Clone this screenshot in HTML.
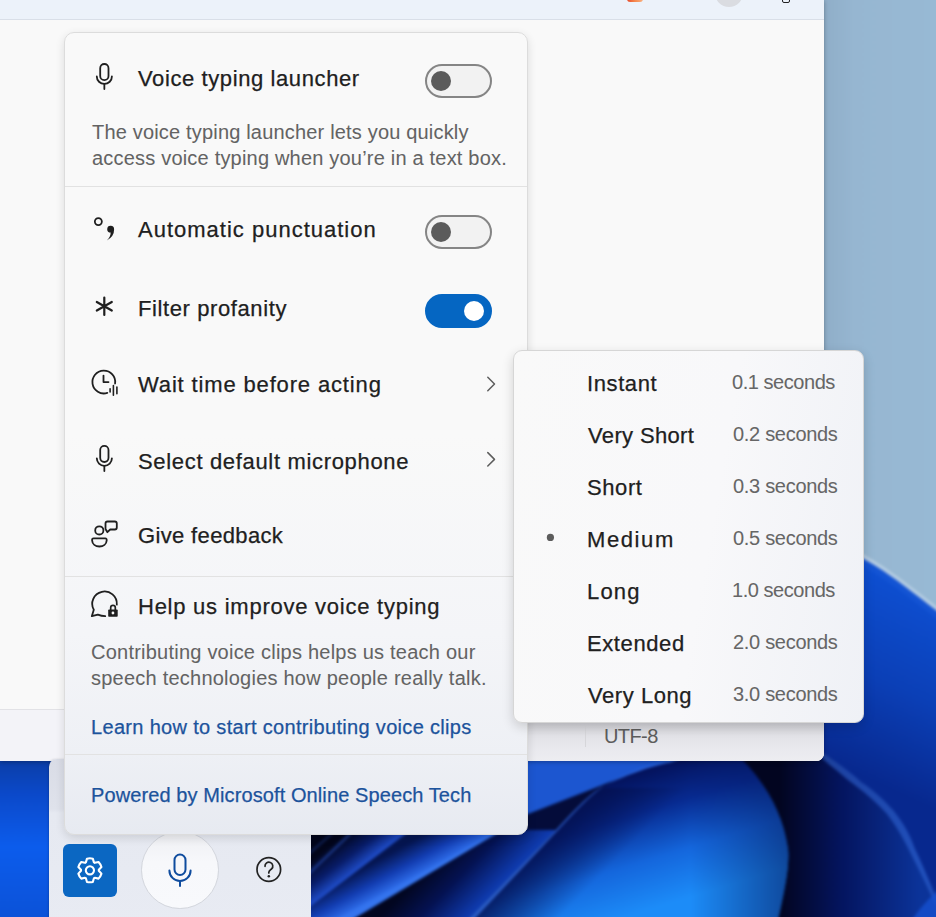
<!DOCTYPE html>
<html><head><meta charset="utf-8">
<style>
*{box-sizing:border-box;margin:0;padding:0}
html,body{width:936px;height:917px;overflow:hidden;background:#0b2a7a;font-family:"Liberation Sans",sans-serif}
.t{position:absolute;white-space:nowrap;line-height:1;-webkit-text-stroke:0.25px currentColor}
.main{font-size:22px;color:#202020;letter-spacing:0.6px}
.desc{font-size:20px;color:#636363;letter-spacing:0.18px;-webkit-text-stroke:0.05px currentColor}
.link{font-size:20px;color:#1c539c;letter-spacing:0.2px}
.secs{font-size:20px;color:#666666;letter-spacing:-0.3px;-webkit-text-stroke:0.05px currentColor}
#wall{position:absolute;left:0;top:0;width:936px;height:917px}
#np{position:absolute;left:0;top:0;width:824px;height:761px;background:#f9f9f9;border-bottom-right-radius:8px;overflow:hidden;box-shadow:0 1px 4px rgba(0,0,0,.3)}
#npTop{position:absolute;left:0;top:0;width:824px;height:20px;background:#ecf2fa;border-bottom:1.5px solid #d9dfe8}
#npStatus{position:absolute;left:0;top:709px;width:824px;height:52px;background:linear-gradient(90deg,#f3f3f8 0%,#f3f3f8 60%,#ececf0 62%,#ebebef 100%);border-top:1px solid #e2e2e6}
#npShade{position:absolute;left:500px;top:722px;width:324px;height:39px;background:linear-gradient(#d2d2d7,#e2e2e7 35%,#e9e9ee 70%,#ededf1)}
#bar{position:absolute;left:49px;top:759px;width:262px;height:170px;background:linear-gradient(#d9dce6 0,#dfe2eb 50px,#e6e9f1 54px,#e8ebf3 100%);border-top-left-radius:8px;box-shadow:-1px 0 2px rgba(0,0,0,.15)}
#gear{position:absolute;left:63px;top:844px;width:54px;height:53px;background:#0b67c2;border-radius:6px}
#micc{position:absolute;left:141px;top:831px;width:77.5px;height:77.5px;border-radius:50%;background:linear-gradient(#eeeff3,#f7f8fb 40%,#f8f9fc);border:1px solid #d3d6dd}
#panel{position:absolute;left:64px;top:32px;width:464px;height:803px;border-radius:10px;background:linear-gradient(#f9f9f9 0%,#f9f9f9 50%,#f4f5f8 75%,#eef0f5 90%,#e7eaf1 100%);border:1px solid #dcdcdc;box-shadow:0 3px 10px rgba(0,0,0,.12)}
.div{position:absolute;left:0;width:462px;height:1px;background:#e2e2e2}
#sub{position:absolute;left:513px;top:350px;width:351px;height:373px;border-radius:9px;background:linear-gradient(100deg,#f9f9f9 0%,#f8f8fa 55%,#eff1f6 100%);border:1px solid #d6d6d6;box-shadow:0 4px 12px rgba(0,0,0,.16)}
.tog{position:absolute;width:67px;height:34px;border-radius:17px;border:2px solid #858585;background:#f2f2f2}
.tog i{position:absolute;left:4px;top:5px;width:20px;height:20px;border-radius:50%;background:#5b5b5b}
.tog.on{background:#0566c2;border-color:#0566c2}
.tog.on i{left:37px;top:5px;background:#fff}
#icons{position:absolute;left:0;top:0;width:936px;height:917px}
</style></head><body>

<svg id="wall" width="936" height="917" viewBox="0 0 936 917">
  <defs>
    <linearGradient id="sky" x1="0" y1="0" x2="1" y2="0">
      <stop offset="0" stop-color="#7d98b2"/><stop offset="0.1" stop-color="#89a6bf"/><stop offset="0.45" stop-color="#96b6d1"/><stop offset="1" stop-color="#97b9d4"/>
    </linearGradient>
    <linearGradient id="rblue" x1="930" y1="600" x2="850" y2="770" gradientUnits="userSpaceOnUse">
      <stop offset="0" stop-color="#0d4ed0"/><stop offset="0.5" stop-color="#0b3fb6"/><stop offset="1" stop-color="#07288e"/>
    </linearGradient>
    <linearGradient id="petal" x1="560" y1="795" x2="600" y2="925" gradientUnits="userSpaceOnUse">
      <stop offset="0" stop-color="#03115a"/><stop offset="0.3" stop-color="#072a90"/><stop offset="0.65" stop-color="#1466dc"/><stop offset="1" stop-color="#1c8cf8"/>
    </linearGradient>
    <linearGradient id="cres" x1="780" y1="0" x2="920" y2="0" gradientUnits="userSpaceOnUse">
      <stop offset="0" stop-color="#020520"/><stop offset="0.45" stop-color="#041560"/><stop offset="1" stop-color="#0b3399"/>
    </linearGradient>
    <linearGradient id="lcol" x1="0" y1="761" x2="0" y2="917" gradientUnits="userSpaceOnUse">
      <stop offset="0" stop-color="#0b3ea8"/><stop offset="0.2" stop-color="#0b48c8"/><stop offset="0.55" stop-color="#0c5cec"/><stop offset="1" stop-color="#0b52d8"/>
    </linearGradient>
    <linearGradient id="folds" x1="519.2" y1="712.8" x2="601.8" y2="826.2" gradientUnits="userSpaceOnUse">
      <stop offset="0" stop-color="#02051a"/>
      <stop offset="0.12" stop-color="#040a30"/>
      <stop offset="0.264" stop-color="#2456d6"/>
      <stop offset="0.272" stop-color="#081650"/>
      <stop offset="0.40" stop-color="#0c2a8c"/>
      <stop offset="0.50" stop-color="#2f76ee"/>
      <stop offset="0.508" stop-color="#040b3a"/>
      <stop offset="0.62" stop-color="#061550"/>
      <stop offset="0.85" stop-color="#1448c4"/>
      <stop offset="1" stop-color="#1a55d0"/>
    </linearGradient>
    <linearGradient id="fold0" x1="330" y1="845" x2="352.6" y2="874.8" gradientUnits="userSpaceOnUse">
      <stop offset="0" stop-color="#02051a"/><stop offset="0.55" stop-color="#081c68"/><stop offset="1" stop-color="#2050d0"/>
    </linearGradient>
    <linearGradient id="fold1" x1="359" y1="870" x2="375" y2="899.4" gradientUnits="userSpaceOnUse">
      <stop offset="0" stop-color="#051550"/><stop offset="0.55" stop-color="#123cb0"/><stop offset="0.93" stop-color="#2a66e2"/><stop offset="1" stop-color="#3474ee"/>
    </linearGradient>
    <linearGradient id="fold2" x1="420" y1="875" x2="467" y2="920.9" gradientUnits="userSpaceOnUse">
      <stop offset="0" stop-color="#020620"/><stop offset="0.45" stop-color="#041252"/><stop offset="1" stop-color="#0f3db4"/>
    </linearGradient>
    <linearGradient id="pdark" x1="515" y1="873" x2="560" y2="917" gradientUnits="userSpaceOnUse">
      <stop offset="0" stop-color="#03104f" stop-opacity="0.85"/><stop offset="1" stop-color="#03104f" stop-opacity="0"/>
    </linearGradient>
    <linearGradient id="pright" x1="690" y1="0" x2="790" y2="0" gradientUnits="userSpaceOnUse">
      <stop offset="0" stop-color="#03104f" stop-opacity="0"/><stop offset="1" stop-color="#03104f" stop-opacity="0.55"/>
    </linearGradient>
    <filter id="blur" x="-10%" y="-10%" width="120%" height="120%" color-interpolation-filters="sRGB"><feGaussianBlur stdDeviation="1.5"/></filter>
  </defs>
  <rect x="0" y="0" width="936" height="917" fill="#081a66"/>
  <g filter="url(#blur)">
  <rect x="-10" y="740" width="70" height="190" fill="url(#lcol)"/>
  <path d="M780 -10 H946 V618 C910 590 885 570 862 558 C840 548 815 540 780 540 Z" fill="url(#sky)"/>
  <path d="M780 540 C815 540 840 548 862 558 C885 570 910 590 946 618 V930 H780 Z" fill="url(#rblue)"/>
  <path d="M780 540 C815 540 840 548 862 558 C885 570 910 590 946 618 V626 C910 598 885 578 862 566 C840 556 815 548 780 548Z" fill="#1a5ad8" opacity="0.5"/>
  <path d="M780 536 C815 536 840 544 862 554 C885 566 910 586 946 614 V618 C910 590 885 570 862 558 C840 548 815 540 780 540Z" fill="#c4d8ea" opacity="0.8"/>
  <!-- folds bottom-left -->
  <rect x="300" y="740" width="480" height="190" fill="#040c3a"/>
  <path d="M300 830 H411 L300 914.6Z" fill="url(#fold0)"/>
  <path d="M300 914.6 L411 830 H503 L335 930 H300Z" fill="url(#fold1)"/>
  <path d="M335 930 L503 830 H556 L458 930Z" fill="url(#fold2)"/>
  <path d="M300 880 L348 834 L352 834 L300 884Z" fill="#2a55c8" opacity="0.5"/>
  <path d="M300 860 L330 834 L333 834 L300 863Z" fill="#2a55c8" opacity="0.35"/>
  <!-- upper band -->
  <path d="M500 750 H700 L671 763 C650 770 620 777 600 786 L500 825Z" fill="#1c56d0"/>
  <!-- crescent -->
  <path d="M735 752 L822 752 C840 765 861 782 861 782 C880 795 893 810 893 810 C905 825 915 849 915 849 C925 870 932 888 940 900 V930 H776 C782 900 790 870 788 849 C782 810 765 782 735 752Z" fill="url(#cres)"/>
  <path d="M822 752 C840 765 850 772 861 782 C880 795 885 802 893 810 C905 825 910 835 915 849 C925 870 928 878 936 898 L936 906 C926 884 920 872 910 852 C902 836 896 826 887 814 C878 804 868 795 856 786 C845 778 832 766 816 754Z" fill="#2f62d0" opacity="0.6"/>
  <!-- bright petal -->
  <path d="M458 930 L556 830 C570 815 585 798 600 788 C625 775 650 766 671 762 C695 755 715 752 735 752 C765 782 782 810 788 849 C790 870 782 900 776 930Z" fill="url(#petal)"/>
  <path d="M458 930 L556 830 C570 815 585 798 600 788 L700 788 L700 930Z" fill="url(#pdark)"/>
  <path d="M690 752 L735 752 C765 782 782 810 788 849 C790 870 782 900 776 930 L690 930Z" fill="url(#pright)"/>
  <path d="M458 930 L556 830 C570 815 585 798 600 788 C625 775 650 766 671 762 L675 760 C652 764 628 772 604 786 C589 796 574 813 560 828 L464 930Z" fill="#3a78f0" opacity="0.7"/>
  <!-- bottom-right swirl -->
  <path d="M905 930 C918 910 930 895 946 885 V930Z" fill="#1550d0" opacity="0.8"/>
  </g>
</svg>

<div id="np">
  <div id="npTop"></div>
  <div style="position:absolute;left:627px;top:-4px;width:16px;height:6px;border-radius:3px;background:linear-gradient(90deg,#e84a2a,#f5894e 50%,#f9b080)"></div>
  <div style="position:absolute;left:715px;top:-21px;width:28px;height:28px;border-radius:50%;background:#dadce1"></div>
  <div style="position:absolute;left:782px;top:-6px;width:8px;height:9px;border-radius:2px;border:1.6px solid #222"></div>
  <div id="npStatus"></div>
  <div id="npShade"></div>
  <div style="position:absolute;left:585px;top:726px;width:1px;height:21px;background:#d6d6da"></div>
  <div class="t secs" style="left:604px;top:726px;color:#5c5c5c;letter-spacing:-0.6px">UTF-8</div>
</div>

<div id="bar"></div>
<div id="gear"></div>
<div id="micc"></div>

<div id="panel">
  <div class="div" style="top:153px"></div>
  <div class="div" style="top:543px"></div>
  <div class="div" style="top:721px"></div>
</div>

<div class="tog" style="left:425px;top:64px"><i></i></div>
<div class="tog" style="left:425px;top:215px"><i></i></div>
<div class="tog on" style="left:425px;top:294px"><i></i></div>

<div class="t main" style="left:138px;top:68px">Voice typing launcher</div>
<div class="t desc" style="left:92px;top:122px">The voice typing launcher lets you quickly</div>
<div class="t desc" style="left:92px;top:148px;letter-spacing:0.2px">access voice typing when you’re in a text box.</div>
<div class="t main" style="left:138px;top:219px;letter-spacing:1.0px">Automatic punctuation</div>
<div class="t main" style="left:138px;top:298px">Filter profanity</div>
<div class="t main" style="left:138px;top:374px;letter-spacing:0.85px">Wait time before acting</div>
<div class="t main" style="left:138px;top:451px;letter-spacing:0.67px">Select default microphone</div>
<div class="t main" style="left:138px;top:525px;letter-spacing:0.35px">Give feedback</div>
<div class="t main" style="left:138px;top:596px;letter-spacing:0.75px">Help us improve voice typing</div>
<div class="t desc" style="left:91px;top:642px;letter-spacing:0.23px">Contributing voice clips helps us teach our</div>
<div class="t desc" style="left:91px;top:668px;letter-spacing:0.23px">speech technologies how people really talk.</div>
<div class="t link" style="left:91px;top:717px;letter-spacing:0.32px">Learn how to start contributing voice clips</div>
<div class="t link" style="left:91px;top:785px;letter-spacing:0.1px">Powered by Microsoft Online Speech Tech</div>

<div id="sub"></div>
<div class="t main" style="left:587px;top:373px;letter-spacing:0.6px">Instant</div>
<div class="t main" style="left:588px;top:425px;letter-spacing:0.35px">Very Short</div>
<div class="t main" style="left:587px;top:477px;letter-spacing:0.6px">Short</div>
<div class="t main" style="left:587px;top:529px;letter-spacing:1.6px">Medium</div>
<div class="t main" style="left:587px;top:581px;letter-spacing:1.2px">Long</div>
<div class="t main" style="left:587px;top:633px;letter-spacing:0.6px">Extended</div>
<div class="t main" style="left:588px;top:685px;letter-spacing:0.55px">Very Long</div>
<div class="t secs" style="left:732px;top:372px;letter-spacing:-0.45px">0.1 seconds</div>
<div class="t secs" style="left:733px;top:424px">0.2 seconds</div>
<div class="t secs" style="left:733px;top:476px">0.3 seconds</div>
<div class="t secs" style="left:733px;top:528px">0.5 seconds</div>
<div class="t secs" style="left:732px;top:580px;letter-spacing:-0.45px">1.0 seconds</div>
<div class="t secs" style="left:733px;top:632px">2.0 seconds</div>
<div class="t secs" style="left:733px;top:684px">3.0 seconds</div>

<svg id="icons" width="936" height="917" viewBox="0 0 936 917" fill="none" stroke-linecap="round" stroke-linejoin="round">
  <g stroke="#1f1f1f" stroke-width="1.8">
    <!-- mic 1 -->
    <rect x="100.2" y="64" width="8.3" height="16.1" rx="4.15"/>
    <path d="M96.8 76.4 A7.55 7.55 0 0 0 111.9 76.4"/>
    <path d="M104.35 84.1 V89"/>
    <!-- punctuation -->
    <circle cx="98.35" cy="221.6" r="3.5"/>
    <!-- asterisk -->
    <path d="M104.3 297.5 V315 M96.8 302 L111.8 310.5 M96.8 310.5 L111.8 302" stroke-width="2.2"/>
    <!-- clock -->
    <path d="M107.3 392.9 A11.4 11.4 0 1 1 115.1 383.5"/>
    <path d="M103.5 375.6 V382.1 H108.5"/>
    <path d="M110.1 388.8 V392 M113.4 385.6 V395.2 M116.9 387 V393.8" stroke-width="1.6"/>
    <!-- mic 2 -->
    <rect x="100.2" y="445.9" width="8.3" height="16.1" rx="4.15"/>
    <path d="M96.8 458.3 A7.55 7.55 0 0 0 111.9 458.3"/>
    <path d="M104.35 466 V471"/>
    <!-- feedback -->
    <circle cx="99.3" cy="530.4" r="4.1"/>
    <path d="M93.6 538.4 H105.3 Q106.9 538.4 106.7 540.4 C106.5 544 103.4 546.5 99.4 546.5 C95.4 546.5 92.3 544 92.1 540.4 Q91.9 538.4 93.6 538.4Z"/>
    <path d="M107.5 521.5 H114.8 Q116.8 521.5 116.8 523.5 V527.5 Q116.8 529.5 114.8 529.5 H110.2 L107.4 532.2 L105.5 529 V523.5 Q105.5 521.5 107.5 521.5Z"/>
    <!-- help us improve -->
    <path d="M116.8 604.6 A12.3 12.3 0 1 0 93.8 609.8 L91.8 616.2 L97.8 614.6 Q101.5 616 105.2 616.2"/>
    <path d="M110.7 609.5 V607.6 A2.3 2.3 0 0 1 115.3 607.6 V609.5" stroke-width="1.7"/>
  </g>
  <rect x="108.2" y="609.4" width="9.5" height="7.4" rx="0.8" fill="#1f1f1f"/>
  <circle cx="112.95" cy="613" r="1.4" fill="#f9f9f9"/>
  <!-- comma -->
  <path d="M107.2 229.2 A3.45 3.45 0 0 1 114.1 229.4 Q114.2 236.4 106.8 240.4 Q110.9 236.6 110.6 232.6 A3.45 3.45 0 0 1 107.2 229.2Z" fill="#1f1f1f"/>
  <!-- chevrons -->
  <path d="M487.8 377.3 L494.5 384 L487.8 390.8 M487.8 452.6 L494.5 459.4 L487.8 466" stroke="#5d5d5d" stroke-width="1.5"/>
  <!-- bullet -->
  <circle cx="550.4" cy="537.4" r="3.6" fill="#5c5c5c"/>
  <!-- gear -->
  <g transform="translate(89.9 870.3)" stroke="#fff" stroke-width="2.1">
    <path d="M-4.04 -7.93L-2.90 -11.64A12.0 12.0 0 0 1 2.90 -11.64L4.04 -7.93A8.9 8.9 0 0 1 4.85 -7.46L4.85 -7.46L8.63 -8.34A12.0 12.0 0 0 1 11.54 -3.31L8.89 -0.47A8.9 8.9 0 0 1 8.89 0.47L8.89 0.47L11.54 3.31A12.0 12.0 0 0 1 8.63 8.34L4.85 7.46A8.9 8.9 0 0 1 4.04 7.93L4.04 7.93L2.90 11.64A12.0 12.0 0 0 1 -2.90 11.64L-4.04 7.93A8.9 8.9 0 0 1 -4.85 7.46L-4.85 7.46L-8.63 8.34A12.0 12.0 0 0 1 -11.54 3.31L-8.89 0.47A8.9 8.9 0 0 1 -8.89 -0.47L-8.89 -0.47L-11.54 -3.31A12.0 12.0 0 0 1 -8.63 -8.34L-4.85 -7.46A8.9 8.9 0 0 1 -4.04 -7.93Z"/>
    <circle cx="0" cy="0" r="4.1"/>
  </g>
  <!-- bar mic -->
  <g stroke="#0f4c9e" stroke-width="2">
    <rect x="174.5" y="854.5" width="11" height="20.5" rx="5.5"/>
    <path d="M169.4 870.4 A10.6 10.6 0 0 0 190.6 870.4"/>
    <path d="M180 881 V886"/>
  </g>
  <!-- help -->
  <g stroke="#222" stroke-width="1.7">
    <circle cx="268.8" cy="869.5" r="11.8"/>
    <path d="M265 866.3 A3.9 3.9 0 1 1 271.6 868.9 C270.2 870.2 268.8 870.8 268.8 872.6 V873"/>
  </g>
  <circle cx="268.8" cy="876.3" r="1.25" fill="#222"/>
</svg>

</body></html>
